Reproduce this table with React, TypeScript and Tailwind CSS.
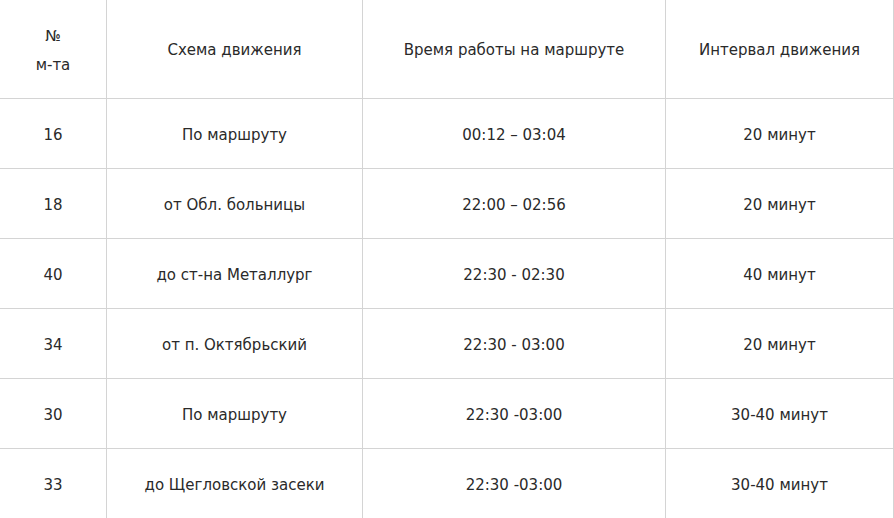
const rows = [
  ["16", "По маршруту", "00:12 – 03:04", "20 минут"],
  ["18", "от Обл. больницы", "22:00 – 02:56", "20 минут"],
  ["40", "до ст-на Металлург", "22:30 - 02:30", "40 минут"],
  ["34", "от п. Октябрьский", "22:30 - 03:00", "20 минут"],
  ["30", "По маршруту", "22:30 -03:00", "30-40 минут"],
  ["33", "до Щегловской засеки", "22:30 -03:00", "30-40 минут"],
];

const cell = "flex items-center justify-center text-center pt-[3px] border-r border-b border-[#d4d4d4]";

export default function App() {
  return (
    <div className="w-[894px] h-[518px] overflow-hidden bg-white text-[#2a2a2a] text-[15px] font-['DejaVu_Sans',sans-serif]">
      <div className="grid grid-cols-[107px_256px_303px_228px] grid-rows-[99px_repeat(6,70px)]">
        <div className={cell}>
          <div className="leading-[29px]">
            <p>№</p>
            <p>м-та</p>
          </div>
        </div>
        <div className={cell}>Схема движения</div>
        <div className={cell}>Время работы на маршруте</div>
        <div className={cell}>Интервал движения</div>
        {rows.map((r, i) => (
          <div key={i} className="contents">
            {r.map((c, j) => (
              <div key={j} className={cell}>
                {c}
              </div>
            ))}
          </div>
        ))}
      </div>
    </div>
  );
}
